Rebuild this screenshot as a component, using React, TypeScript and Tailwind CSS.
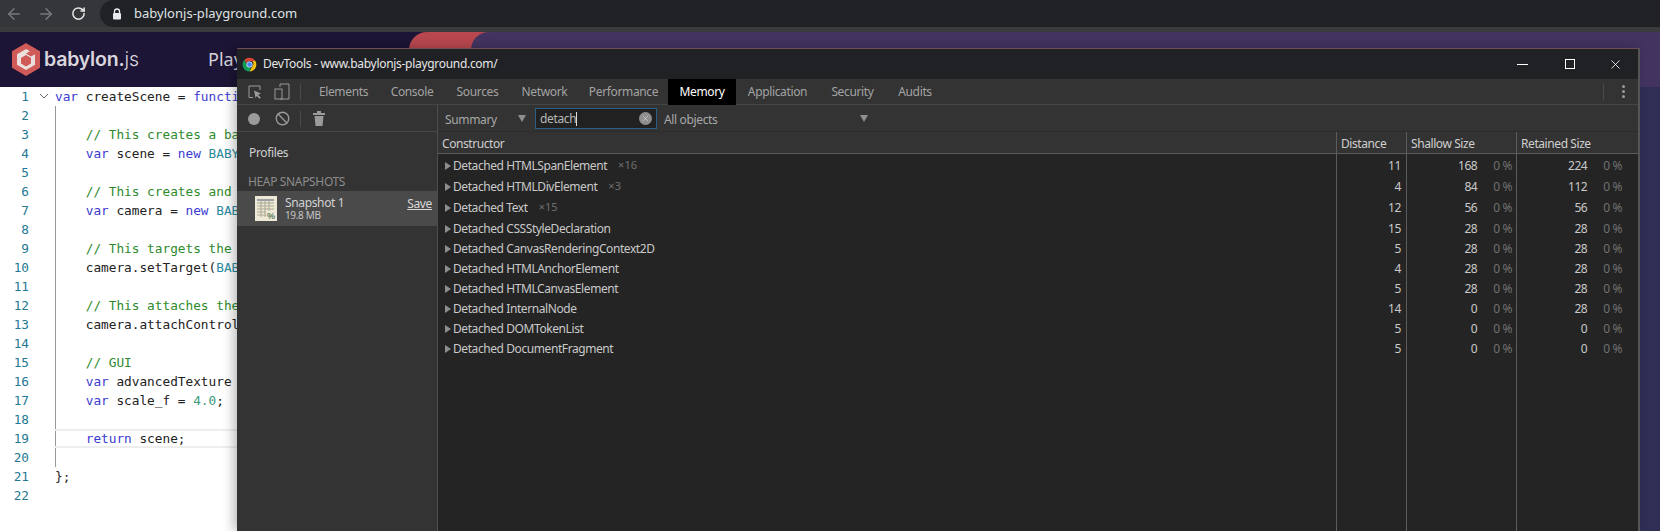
import { ArrowLeft, ArrowRight, RotateCw, Ban, X } from "lucide-react";

type Tok = [string, string];
const K = "text-[#3b3bd0]";
const C = "text-[#2e8b2e]";
const T = "text-[#2b8a9e]";
const N = "text-[#222]";
const D = "text-[#3a9a7a]";

const code: (Tok[] | null)[] = [
  [["var", K], [" createScene = ", N], ["functi", K]],
  null,
  [["    // This creates a ba", C]],
  [["    var", K], [" scene = ", N], ["new", K], [" ", N], ["BABY", T]],
  null,
  [["    // This creates and", C]],
  [["    var", K], [" camera = ", N], ["new", K], [" ", N], ["BAB", T]],
  null,
  [["    // This targets the", C]],
  [["    camera.setTarget(", N], ["BAB", T]],
  null,
  [["    // This attaches the", C]],
  [["    camera.attachControl", N]],
  null,
  [["    // GUI", C]],
  [["    var", K], [" advancedTexture", N]],
  [["    var", K], [" scale_f = ", N], ["4.0", D], [";", N]],
  null,
  [["    return", K], [" scene;", N]],
  null,
  [["};", N]],
  null,
];

const tabs: [string, string][] = [
  ["Elements", "w-[71px]"],
  ["Console", "w-[66px]"],
  ["Sources", "w-[65px]"],
  ["Network", "w-[69px]"],
  ["Performance", "w-[89px]"],
  ["Memory", "w-[68px]"],
  ["Application", "w-[83px]"],
  ["Security", "w-[67px]"],
  ["Audits", "w-[58px]"],
];

const rows: [string, string, number, number, number, string][] = [
  ["Detached HTMLSpanElement", "×16", 11, 168, 224, "h-[21px]"],
  ["Detached HTMLDivElement", "×3", 4, 84, 112, "h-[21px]"],
  ["Detached Text", "×15", 12, 56, 56, "h-[21px]"],
  ["Detached CSSStyleDeclaration", "", 15, 28, 28, "h-[21px]"],
  ["Detached CanvasRenderingContext2D", "", 5, 28, 28, "h-[20px]"],
  ["Detached HTMLAnchorElement", "", 4, 28, 28, "h-[20px]"],
  ["Detached HTMLCanvasElement", "", 5, 28, 28, "h-[20px]"],
  ["Detached InternalNode", "", 14, 0, 28, "h-[20px]"],
  ["Detached DOMTokenList", "", 5, 0, 0, "h-[20px]"],
  ["Detached DocumentFragment", "", 5, 0, 0, "h-[20px]"],
];

function Logo() {
  return (
    <svg width="30" height="33" viewBox="0 0 30 33" className="shrink-0">
      <polygon points="15,0 29,8.2 29,24.8 15,33 1,24.8 1,8.2" fill="#cf5a58" />
      <polygon points="15,6 19,8.3 15,10.6 20,13.5 24,11.2 24,21.8 15,27 6,21.8 6,11.2" fill="#eadfdd" />
      <polygon points="15,12 20,15 20,20.5 15,23.5 10,20.5 10,15" fill="#cf5a58" />
    </svg>
  );
}

function ChromeIcon() {
  return (
    <svg width="15" height="15" viewBox="0 0 24 24" className="shrink-0">
      <path d="M12 1a11 11 0 0 1 9.5 5.5H12a5.5 5.5 0 0 0-5 3.2L3.6 4.9A11 11 0 0 1 12 1z" fill="#db4437" />
      <path d="M21.5 6.5A11 11 0 0 1 12 23l4.7-8.2a5.5 5.5 0 0 0-.6-8.3z" fill="#f4c20d" />
      <path d="M12 23A11 11 0 0 1 3.6 4.9L7.9 12a5.5 5.5 0 0 0 6.6 4.9z" fill="#0f9d58" />
      <circle cx="12" cy="12" r="4.4" fill="#4285f4" stroke="#fff" strokeWidth="1.2" />
    </svg>
  );
}

function Triangle() {
  return (
    <svg width="6" height="8" viewBox="0 0 6 8" className="shrink-0">
      <polygon points="0,0 6,4 0,8" fill="#8e8e8e" />
    </svg>
  );
}

function DownTriangle() {
  return (
    <svg width="8" height="7" viewBox="0 0 8 7" className="shrink-0">
      <polygon points="0,0 8,0 4,7" fill="#8e8e8e" />
    </svg>
  );
}

function SnapshotIcon() {
  return (
    <svg width="22" height="25" viewBox="0 0 22 25" className="shrink-0">
      <rect width="22" height="25" fill="#eee9d6" />
      <rect x="2" y="3" width="17" height="2" fill="#9aa0a8" />
      {[7, 10, 13, 16, 19].map((y) => (
        <line key={y} x1="2" x2="19" y1={y} y2={y} stroke="#a8a894" strokeWidth="1" />
      ))}
      {[6, 10, 14].map((x) => (
        <line key={x} x1={x} x2={x} y1="3" y2="21" stroke="#a8a894" strokeWidth="1" />
      ))}
      <rect x="11" y="15" width="11" height="10" fill="#eee9d6" />
      <text x="12" y="23" fontSize="9" fontWeight="700" fill="#5d7a5d" fontFamily="Liberation Sans, sans-serif">%</text>
    </svg>
  );
}

function Browser() {
  return (
    <div className="flex h-[27px] shrink-0 items-center bg-[#35363a]">
      <div className="flex w-[100px] shrink-0 items-center">
        <ArrowLeft size={18} strokeWidth={2} className="ml-[5px] text-[#77787b]" />
        <ArrowRight size={18} strokeWidth={2} className="ml-[14px] text-[#77787b]" />
        <RotateCw size={15} strokeWidth={2.4} className="ml-[16px] text-[#e4e5e6]" />
      </div>
      <div className="flex h-[27px] flex-1 items-center rounded-l-full bg-[#202124]">
        <svg width="10" height="12" viewBox="0 0 10 12" className="ml-[12px]">
          <path d="M2.5 5V3.5a2.5 2.5 0 0 1 5 0V5" fill="none" stroke="#e8eaed" strokeWidth="1.3" />
          <rect x="1" y="5" width="8" height="6.5" rx="1" fill="#e8eaed" />
        </svg>
        <span className="ml-[12px] text-[13px] tracking-[0.02px] text-[#dfe1e5]">babylonjs-playground.com</span>
      </div>
    </div>
  );
}

function SiteHeader() {
  return (
    <div className="relative flex h-[55px] shrink-0 items-center bg-[#1c1535] tracking-normal">
      <div className="absolute left-[409px] top-0 h-[55px] w-[90px] rounded-tl-[18px] bg-[#b8474f]" />
      <div className="absolute left-[471px] right-0 top-0 h-[55px] rounded-tl-[18px] bg-[#423360]" />
      <div className="relative ml-[11px] flex items-center">
        <Logo />
        <span className="ml-[3px] font-['Inter',sans-serif] text-[19.5px] font-semibold tracking-[-0.2px] text-[#d9d6de]">babylon.</span>
        <span className="font-['Inter',sans-serif] text-[19.5px] font-light text-[#d9d6de]">js</span>
      </div>
      <span className="relative ml-[69px] text-[18px] text-[#d5d2dc]">Play</span>
    </div>
  );
}

function Editor() {
  return (
    <div className="flex flex-1 overflow-hidden">
      <div className="flex flex-1 bg-white font-['DejaVu_Sans_Mono',monospace] text-[12.75px] tracking-normal">
        <div className="w-[29px] shrink-0 text-right leading-[19px] text-[#237893]">
          {code.map((_, i) => (
            <div key={i} className="h-[19px]">{i + 1}</div>
          ))}
        </div>
        <div className="flex w-[26px] shrink-0 justify-end pr-[6px] pt-[6px]">
          <svg width="10" height="6" viewBox="0 0 10 6">
            <path d="M1 1l4 4 4-4" fill="none" stroke="#666" strokeWidth="1" />
          </svg>
        </div>
        <div className="flex-1">
          {code.map((line, i) => (
            <div
              key={i}
              className={
                "h-[19px] whitespace-pre " +
                (i === 18 ? "border-y-2 border-[#eeeeee] leading-[15px] " : "leading-[19px] ") +
                (i > 0 && i < 20 ? "shadow-[inset_1px_0_0_#999999] " : "")
              }
            >
              {line ? line.map(([t, c], j) => <span key={j} className={c}>{t}</span>) : " "}
            </div>
          ))}
        </div>
      </div>
      <div className="w-[20px] shrink-0 bg-[#2f2e55]" />
    </div>
  );
}

function TitleBar() {
  return (
    <div className="flex h-[31px] shrink-0 items-center border-t border-[#6b4f55] bg-[#202124]">
      <span className="ml-[5px]"><ChromeIcon /></span>
      <span className="ml-[6px] text-[12px] tracking-[-0.3px] text-[#e6e6e6]">DevTools - www.babylonjs-playground.com/</span>
      <div className="ml-auto flex items-center pr-[15px]">
        <div className="h-[1px] w-[11px] bg-white" />
        <div className="ml-[37px] h-[10px] w-[10px] border border-white" />
        <X size={15} strokeWidth={1.3} className="ml-[33px] text-white" />
      </div>
    </div>
  );
}

function TabStrip() {
  return (
    <div className="flex h-[26px] shrink-0 items-center border-b border-[#454545] bg-[#333333]">
      <svg width="15" height="14" viewBox="0 0 15 14" className="ml-[11px]">
        <path d="M5 12.5H1V1h11v4" fill="none" stroke="#9a9a9a" strokeWidth="1" />
        <path d="M6 5.5l7 3-3 1.2 2.8 2.8-1.3 1.2-2.7-2.8L7.5 13z" fill="#9a9a9a" />
      </svg>
      <svg width="16" height="17" viewBox="0 0 16 17" className="ml-[11px]">
        <path d="M6 4V1h9v15H6" fill="none" stroke="#9a9a9a" strokeWidth="1" />
        <rect x="1" y="6" width="7" height="10" fill="none" stroke="#9a9a9a" strokeWidth="1" />
      </svg>
      <div className="ml-[10px] h-[16px] w-[1px] bg-[#4a4a4a]" />
      <div className="ml-[7px] flex h-[26px] items-stretch">
        {tabs.map(([name, w]) => (
          <div
            key={name}
            className={
              "flex items-center justify-center pt-[1px] text-[12px] " + w + " " +
              (name === "Memory" ? "bg-black text-white" : "text-[#a3a3a3]")
            }
          >
            {name}
          </div>
        ))}
      </div>
      <div className="ml-auto mr-[34px] h-[16px] w-[1px] bg-[#4a4a4a]" />
      <div className="absolute right-[13px] flex flex-col gap-[2px]">
        <div className="h-[3px] w-[3px] rounded-full bg-[#9a9a9a]" />
        <div className="h-[3px] w-[3px] rounded-full bg-[#9a9a9a]" />
        <div className="h-[3px] w-[3px] rounded-full bg-[#9a9a9a]" />
      </div>
    </div>
  );
}

function Sidebar() {
  return (
    <div className="flex w-[201px] shrink-0 flex-col border-r border-[#4d4d4d] bg-[#333333]">
      <div className="flex h-[27px] shrink-0 items-center border-b border-[#454545] pt-[1px]">
        <div className="ml-[11px] h-[12px] w-[12px] rounded-full bg-[#9a9a9a]" />
        <Ban size={15} strokeWidth={2.2} className="ml-[15px] text-[#9a9a9a]" />
        <div className="ml-[10px] h-[16px] w-[1px] bg-[#4a4a4a]" />
        <svg width="12" height="15" viewBox="0 0 12 15" className="ml-[12px]">
          <rect x="0" y="2" width="12" height="2" fill="#9a9a9a" />
          <rect x="4" y="0" width="4" height="2" fill="#9a9a9a" />
          <path d="M1.5 5h9l-1 10h-7z" fill="#9a9a9a" />
        </svg>
      </div>
      <div className="ml-[12px] mt-[13px] text-[12px] leading-[16px] text-[#d0d0d0]">Profiles</div>
      <div className="ml-[11px] mt-[13px] text-[12px] leading-[16px] text-[#8c8c8c]">HEAP SNAPSHOTS</div>
      <div className="mt-[1px] flex h-[35px] items-center bg-[#4a4a4a] pr-[5px]">
        <span className="ml-[18px]"><SnapshotIcon /></span>
        <div className="ml-[8px] flex flex-col">
          <span className="text-[12px] leading-[14px] text-[#d2d2d2]">Snapshot 1</span>
          <span className="text-[10px] leading-[11px] text-[#c6c6c6]">19.8 MB</span>
        </div>
        <span className="mb-[10px] ml-auto text-[12px] leading-[14px] text-[#d8d8d8] underline">Save</span>
      </div>
    </div>
  );
}

function FilterBar() {
  return (
    <div className="flex h-[27px] shrink-0 items-center border-b border-[#2c2c2c] bg-[#333333] pt-[1px]">
      <span className="ml-[7px] w-[73px] pt-[2px] text-[12px] text-[#a8a8a8]">Summary</span>
      <DownTriangle />
      <div className="ml-[9px] flex h-[21px] w-[122px] items-center border border-[#2a5f86] bg-[#212121]">
        <span className="ml-[4px] mt-[1px] border-r border-[#dddddd] text-[12px] leading-[14px] text-[#b8b8b8]">detach</span>
        <div className="ml-auto mr-[4px] flex h-[13px] w-[13px] items-center justify-center rounded-full bg-[#8f8f8f]">
          <X size={9} strokeWidth={1.6} className="text-[#d8d8d8]" />
        </div>
      </div>
      <span className="ml-[7px] w-[196px] pt-[2px] text-[12px] text-[#a8a8a8]">All objects</span>
      <DownTriangle />
    </div>
  );
}

function DataTable() {
  const cols = "grid grid-cols-[898px_70px_110px_1fr]";
  return (
    <div className="flex min-h-0 flex-1 flex-col bg-[#242424] text-[12px] tracking-[-0.42px]">
      <div className={cols + " h-[22px] shrink-0 items-center border-b border-[#5c5c5c] bg-[#333333] text-[#cfcfcf]"}>
        <span className="pl-[4px] pt-[2px]">Constructor</span>
        <span className="flex h-full items-center border-l border-[#5c5c5c] pl-[4px] pt-[2px]">Distance</span>
        <span className="flex h-full items-center border-l border-[#5c5c5c] pl-[4px] pt-[2px]">Shallow Size</span>
        <span className="flex h-full items-center border-l border-[#5c5c5c] pl-[4px] pt-[2px]">Retained Size</span>
      </div>
      <div className={cols + " relative min-h-0 flex-1 content-start pt-[1px]"}>
        {rows.map(([name, count, dist, shallow, retained, h]) => (
          <div key={name} className="contents">
            <div className={"flex items-center pl-[7px] " + h}>
              <Triangle />
              <span className="ml-[2px] text-[#c9c9c9]">{name}</span>
              {count ? <span className="ml-[11px] text-[11px] tracking-normal text-[#707070]">{count}</span> : null}
            </div>
            <div className={"flex items-center justify-end pr-[5px] text-[#c9c9c9] " + h}>{dist}</div>
            <div className={"flex items-center justify-end pr-[4px] text-[#c9c9c9] " + h}>
              <span>{shallow}</span>
              <span className="ml-[16px] text-[#707070]">0 %</span>
            </div>
            <div className={"flex items-center justify-end pr-[16px] text-[#c9c9c9] " + h}>
              <span>{retained}</span>
              <span className="ml-[16px] text-[#707070]">0 %</span>
            </div>
          </div>
        ))}
        <div className="absolute bottom-0 left-[898px] top-0 w-[1px] bg-[#5c5c5c]" />
        <div className="absolute bottom-0 left-[968px] top-0 w-[1px] bg-[#5c5c5c]" />
        <div className="absolute bottom-0 left-[1078px] top-0 w-[1px] bg-[#5c5c5c]" />
      </div>
    </div>
  );
}

function DevTools() {
  return (
    <div className="absolute left-[237px] top-[48px] flex h-[483px] w-[1403px] flex-col border-r-2 border-[#555555] bg-[#333333] shadow-[-4px_0_10px_rgba(0,0,0,0.25)]">
      <TitleBar />
      <TabStrip />
      <div className="flex min-h-0 flex-1">
        <Sidebar />
        <div className="flex min-w-0 flex-1 flex-col">
          <FilterBar />
          <DataTable />
        </div>
      </div>
    </div>
  );
}

export default function App() {
  return (
    <div className="relative flex h-[531px] w-[1660px] flex-col overflow-hidden bg-white font-['Noto_Sans',sans-serif] tracking-[-0.35px]">
      <Browser />
      <div className="h-[5px] shrink-0 bg-[#3a3b3c]" />
      <SiteHeader />
      <Editor />
      <DevTools />
    </div>
  );
}
